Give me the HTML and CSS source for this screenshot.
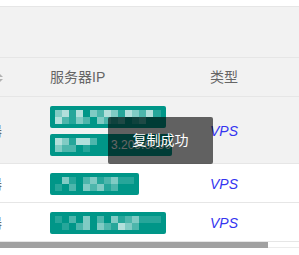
FILE: index.html
```html
<!DOCTYPE html>
<html lang="zh-CN">
<head>
    <meta charset="UTF-8">
    <meta name="viewport" content="width=device-width, initial-scale=1.0">
    <title>服务器列表</title>
    <link rel="stylesheet" href="styles.css">
</head>
<body>
    <div class="page">
        <div class="table-box">
            <div class="toolbar"></div>
            <table class="data-table">
                <colgroup>
                    <col class="col-name">
                    <col class="col-ip">
                    <col class="col-type">
                </colgroup>
                <thead>
                    <tr>
                        <th class="cell-name">名称<span class="sort"></span></th>
                        <th>服务器IP</th>
                        <th>类型</th>
                    </tr>
                </thead>
                <tbody>
                    <tr class="hover">
                        <td class="cell-name">服务器</td>
                        <td>
                            <div class="ip-list">
                                <span class="ip-chip"><span class="mosaic m1"></span></span>
                                <span class="ip-chip wide"><span class="mosaic m2"></span><span class="ip-text">3.209.6090</span></span>
                            </div>
                        </td>
                        <td><em class="type">VPS</em></td>
                    </tr>
                    <tr>
                        <td class="cell-name">服务器</td>
                        <td>
                            <div class="ip-list">
                                <span class="ip-chip short"><span class="mosaic m3"></span></span>
                            </div>
                        </td>
                        <td><em class="type">VPS</em></td>
                    </tr>
                    <tr>
                        <td class="cell-name">服务器</td>
                        <td>
                            <div class="ip-list">
                                <span class="ip-chip"><span class="mosaic m4"></span></span>
                            </div>
                        </td>
                        <td><em class="type">VPS</em></td>
                    </tr>
                </tbody>
            </table>
        </div>
        <div class="scrollbar"><div class="thumb"></div></div>
        <div class="toast">复制成功</div>
    </div>
</body>
</html>
```
FILE: styles.css
```css
body {
    margin: 0;
    font-family: "Liberation Sans", Arial, "Noto Sans CJK SC", sans-serif;
    font-size: 14px;
    color: #666;
    background-color: #fff;
}

.page {
    position: relative;
    width: 299px;
    height: 255px;
    overflow: hidden;
}

.table-box {
    margin-left: -60px;
    width: 400px;
}

.toolbar {
    margin-top: 6px;
    height: 50px;
    border-top: 1px solid #e6e6e6;
    background-color: #f2f2f2;
}

.data-table {
    border-collapse: collapse;
    table-layout: fixed;
    width: 400px;
}

.col-name { width: 95px; }
.col-ip { width: 160px; }
.col-type { width: 145px; }

.data-table th,
.data-table td {
    padding: 9px 15px 7px;
    line-height: 22px;
    text-align: left;
    font-weight: normal;
    white-space: nowrap;
    vertical-align: middle;
    border-bottom: 1px solid #e6e6e6;
}

.data-table th {
    padding: 8px 15px;
    background-color: #f2f2f2;
    border-top: 1px solid #e6e6e6;
}

.data-table .cell-name {
    text-align: right;
    padding-right: 33px;
}

.data-table th.cell-name {
    padding-right: 32px;
}

.sort {
    display: inline-block;
    position: relative;
    width: 8px;
    height: 12px;
    margin-left: 4px;
    vertical-align: middle;
}

.sort::before,
.sort::after {
    content: "";
    position: absolute;
    left: 0;
    border: 4px solid transparent;
}

.sort::before {
    top: -3px;
    border-bottom-color: #b2b2b2;
}

.sort::after {
    bottom: -3px;
    border-top-color: #b2b2b2;
}

.hover td {
    background-color: #f2f2f2;
}

.ip-list {
    display: flex;
    flex-direction: column;
    align-items: flex-start;
    gap: 6px;
}

.ip-chip {
    display: flex;
    align-items: center;
    width: 106px;
    height: 22px;
    padding: 0 5px;
    border-radius: 2px;
    background-color: #009688;
}

.ip-chip.wide { width: 112px; }
.ip-chip.short { width: 79px; }

.mosaic {
    display: block;
    flex: none;
    height: 14px;
    width: 100%;
}

.ip-chip.wide .mosaic { width: 53px; }

.ip-text {
    margin-left: 3px;
    font-size: 12px;
    color: #fff;
}

.m1 {
    background:
        linear-gradient(90deg, #80cbc4 0 7px, #b2dfdb 7px 14px, #26a69a 14px 21px, #b2dfdb 21px 28px, #009688 28px 35px, #80cbc4 35px 42px, #4db6ac 42px 49px, #b2dfdb 49px 56px, #80cbc4 56px 63px, #26a69a 63px 70px, #b2dfdb 70px 77px, #80cbc4 77px 84px, #4db6ac 84px 91px, #b2dfdb 91px 98px, #26a69a 98px) top / 100% 50% no-repeat,
        linear-gradient(90deg, #b2dfdb 0 7px, #4db6ac 7px 14px, #26a69a 14px 21px, #80cbc4 21px 28px, #4db6ac 28px 35px, #009688 35px 42px, #80cbc4 42px 49px, #4db6ac 49px 56px, #26a69a 56px 63px, #4db6ac 63px 70px, #009688 70px 77px, #26a69a 77px 84px, #4db6ac 84px 91px, #009688 91px) bottom / 100% 50% no-repeat;
}

.m2 {
    background:
        linear-gradient(90deg, #b2dfdb 0 7px, #80cbc4 7px 14px, #26a69a 14px 21px, #b2dfdb 21px 28px, #b2dfdb 28px 35px, #4db6ac 35px 42px, #009688 42px) top / 100% 50% no-repeat,
        linear-gradient(90deg, #80cbc4 0 7px, #4db6ac 7px 14px, #4db6ac 14px 21px, #009688 21px 28px, #26a69a 28px 35px, #009688 35px) bottom / 100% 50% no-repeat;
}

.m3 {
    background:
        linear-gradient(90deg, #009688 0 7px, #80cbc4 7px 14px, #26a69a 14px 21px, #009688 21px 28px, #4db6ac 28px 35px, #80cbc4 35px 42px, #26a69a 42px 49px, #4db6ac 49px 56px, #80cbc4 56px 63px, #26a69a 63px) top / 100% 50% no-repeat,
        linear-gradient(90deg, #26a69a 0 7px, #009688 7px 14px, #4db6ac 14px 21px, #009688 21px 28px, #80cbc4 28px 35px, #4db6ac 35px 42px, #80cbc4 42px 49px, #26a69a 49px 56px, #4db6ac 56px 63px, #009688 63px) bottom / 100% 50% no-repeat;
}

.m4 {
    background:
        linear-gradient(90deg, #26a69a 0 7px, #009688 7px 14px, #4db6ac 14px 21px, #009688 21px 28px, #80cbc4 28px 35px, #009688 35px 42px, #4db6ac 42px 49px, #009688 49px 56px, #80cbc4 56px 63px, #26a69a 63px 70px, #4db6ac 70px 77px, #80cbc4 77px 84px, #26a69a 84px) top / 100% 50% no-repeat,
        linear-gradient(90deg, #009688 0 7px, #26a69a 7px 14px, #009688 14px 21px, #4db6ac 21px 28px, #80cbc4 28px 35px, #009688 35px 42px, #80cbc4 42px 49px, #4db6ac 49px 56px, #26a69a 56px 63px, #b2dfdb 63px 70px, #80cbc4 70px 77px, #4db6ac 77px 84px, #009688 84px) bottom / 100% 50% no-repeat;
}

.type {
    color: #3535f0;
    font-style: italic;
}

.scrollbar {
    height: 5px;
    border-bottom: 1px solid #ececec;
}

.thumb {
    width: 268px;
    height: 6px;
    background-color: #a1a1a1;
}

.toast {
    position: absolute;
    left: 108px;
    top: 117px;
    width: 105px;
    height: 47px;
    line-height: 47px;
    border-radius: 2px;
    background-color: rgba(0, 0, 0, 0.6);
    color: #fff;
    text-align: center;
}
```
